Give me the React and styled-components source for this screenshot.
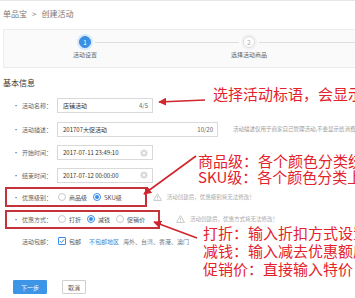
import React from 'react'
import styled, { createGlobalStyle } from 'styled-components'

const GlobalStyle = createGlobalStyle`
  html, body { margin:0; padding:0; background:#fff; }
  body { font-family:"Noto Sans CJK SC","Noto Sans",sans-serif; overflow:hidden; }
`

const Page = styled.div`
  position:relative;
  width:355px;
  height:298px;
  overflow:hidden;
  box-sizing:border-box;
  border-top:1px solid #e6e6e6;
  background:#fff;
`

const Crumb = styled.div`
  height:24px;
  display:flex;
  align-items:center;
  gap:5px;
  padding-left:3px;
  font-size:8px;
  color:#777;
  white-space:nowrap;
`

const Steps = styled.div`
  margin:4px 0 0 3px;
  height:39px;
  box-sizing:border-box;
  border:1px solid #ececec;
  border-right:none;
  background:#fafafa;
  display:flex;
  align-items:flex-start;
  padding:6px 0 0 75px;
`

const Step = styled.div`
  width:12px;
  display:flex;
  flex-direction:column;
  align-items:center;
  flex-shrink:0;
`

const Dot = styled.div`
  width:12px;
  height:12px;
  border-radius:50%;
  box-sizing:border-box;
  display:flex;
  align-items:center;
  justify-content:center;
  font-size:7px;
  line-height:1;
  background:${p => (p.active ? '#3a8ee6' : '#fff')};
  color:${p => (p.active ? '#fff' : '#aaa')};
  border:1px solid ${p => (p.active ? '#3a8ee6' : '#dcdcdc')};
  box-shadow:0 0 0 2px ${p => (p.active ? '#d8e9fa' : '#f3f3f3')};
`

const StepLabel = styled.div`
  margin-top:3px;
  font-size:6px;
  line-height:8px;
  color:#666;
  white-space:nowrap;
`

const Connector = styled.div`
  flex:${p => (p.grow ? '1' : '0 0 144px')};
  height:1px;
  background:#dedede;
  margin:6px ${p => (p.grow ? '0' : '4px')} 0 4px;
`

const Title = styled.div`
  margin:10px 0 5px 3px;
  font-size:8px;
  line-height:10px;
  color:#333;
`

const Row = styled.div`
  display:flex;
  align-items:center;
  height:${p => p.h}px;
`

const Label = styled.div`
  width:53px;
  flex-shrink:0;
  box-sizing:border-box;
  padding-right:1px;
  text-align:right;
  font-size:6px;
  color:#666;
  white-space:nowrap;
`

const Req = styled.span`
  color:#555;
  margin-right:3px;
`

const Input = styled.div`
  margin-left:4px;
  width:${p => p.w}px;
  height:15px;
  flex-shrink:0;
  box-sizing:border-box;
  border:1px solid #d9d9d9;
  background:#fff;
  display:flex;
  align-items:center;
  justify-content:space-between;
  padding:0 4px 0 5px;
  font-size:6px;
  color:#333;
  white-space:nowrap;
`

const Count = styled.span`
  color:#666;
`

const Help = styled.span`
  margin-left:15px;
  font-size:5.5px;
  color:#999;
  white-space:nowrap;
`

const Choices = styled.div`
  margin-left:5px;
  display:flex;
  align-items:center;
  gap:6px;
`

const Choice = styled.label`
  display:flex;
  align-items:center;
  gap:3px;
  font-size:6px;
  color:#555;
  white-space:nowrap;
`

const Radio = styled.span`
  width:8px;
  height:8px;
  border-radius:50%;
  box-sizing:border-box;
  border:1px solid ${p => (p.on ? '#3a8ee6' : '#c8c8c8')};
  background:#fff;
  display:flex;
  align-items:center;
  justify-content:center;
  &::after {
    content:'';
    width:4px;
    height:4px;
    border-radius:50%;
    background:${p => (p.on ? '#3a8ee6' : 'transparent')};
  }
`

const Warn = styled.div`
  margin-left:31px;
  display:flex;
  align-items:center;
  gap:5px;
  font-size:5.5px;
  color:#aaa;
  white-space:nowrap;
`

const Check = styled.span`
  margin-left:5px;
  width:8px;
  height:8px;
  box-sizing:border-box;
  border:1px solid #3a8ee6;
  border-radius:1px;
  display:flex;
  align-items:center;
  justify-content:center;
`

const Plain = styled.span`
  margin-left:${p => p.ml || 0}px;
  font-size:6px;
  color:${p => p.color || '#555'};
  white-space:nowrap;
`

const Actions = styled.div`
  margin-top:28px;
  padding-left:13px;
  display:flex;
  gap:15px;
`

const Button = styled.button`
  width:${p => p.w}px;
  height:14px;
  padding:0;
  box-sizing:border-box;
  border:1px solid ${p => (p.primary ? '#3d95e8' : '#cfcfcf')};
  background:${p => (p.primary ? '#3d95e8' : '#fff')};
  color:${p => (p.primary ? '#fff' : '#555')};
  font-family:inherit;
  font-size:6px;
  border-radius:1px;
`

const Marks = styled.svg`
  position:absolute;
  left:0;
  top:0;
  pointer-events:none;
`

const Note = styled.div`
  position:absolute;
  left:${p => p.x}px;
  top:${p => p.y}px;
  font-size:15px;
  line-height:${p => p.lh}px;
  color:#e4222c;
  white-space:nowrap;
`

const ClearIcon = () => (
  <svg width="8" height="8" viewBox="0 0 8 8">
    <circle cx="4" cy="4" r="3.6" fill="#dadada" />
    <path d="M2.6 2.6 L5.4 5.4 M5.4 2.6 L2.6 5.4" stroke="#fff" strokeWidth="0.9" />
  </svg>
)

const WarnIcon = () => (
  <svg width="9" height="8" viewBox="0 0 9 8">
    <path d="M4.5 0.6 L8.5 7.4 L0.5 7.4 Z" fill="none" stroke="#bbb" strokeWidth="0.8" />
    <path d="M4.5 3 V5.3 M4.5 6 V6.6" stroke="#bbb" strokeWidth="0.8" />
  </svg>
)

const TickIcon = () => (
  <svg width="6" height="6" viewBox="0 0 6 6">
    <path d="M0.8 3.1 L2.4 4.6 L5.2 1.4" fill="none" stroke="#3a8ee6" strokeWidth="1" />
  </svg>
)

const App = () => {
  return (
    <Page>
      <GlobalStyle />
      <Crumb>
        <span>单品宝</span>
        <span>&gt;</span>
        <span>创建活动</span>
      </Crumb>

      <Steps>
        <Step>
          <Dot active>1</Dot>
          <StepLabel>活动设置</StepLabel>
        </Step>
        <Connector />
        <Step>
          <Dot>2</Dot>
          <StepLabel>选择活动商品</StepLabel>
        </Step>
        <Connector grow />
      </Steps>

      <Title>基本信息</Title>

      <Row h={24}>
        <Label><Req>•</Req>活动名称：</Label>
        <Input w={96}>店铺活动<Count>4/5</Count></Input>
      </Row>
      <Row h={24}>
        <Label><Req>•</Req>活动描述：</Label>
        <Input w={161}>201707大促活动<Count>10/20</Count></Input>
        <Help>活动描述仅用于商家自己管理活动,不会显示给消费者</Help>
      </Row>
      <Row h={23}>
        <Label><Req>•</Req>开始时间：</Label>
        <Input w={96}>2017-07-11 23:49:10<ClearIcon /></Input>
      </Row>
      <Row h={22}>
        <Label><Req>•</Req>结束时间：</Label>
        <Input w={96}>2017-07-12 00:00:00<ClearIcon /></Input>
      </Row>
      <Row h={22}>
        <Label><Req>•</Req>优惠级别：</Label>
        <Choices>
          <Choice><Radio />商品级</Choice>
          <Choice><Radio on />SKU级</Choice>
        </Choices>
        <Warn><WarnIcon />活动创建后，优惠级别将无法修改！</Warn>
      </Row>
      <Row h={22}>
        <Label><Req>•</Req>优惠方式：</Label>
        <Choices>
          <Choice><Radio />打折</Choice>
          <Choice><Radio on />减钱</Choice>
          <Choice><Radio />促销价</Choice>
        </Choices>
        <Warn><WarnIcon />活动创建后，优惠方式将无法修改！</Warn>
      </Row>
      <Row h={22}>
        <Label>活动包邮：</Label>
        <Check><TickIcon /></Check>
        <Plain ml={3}>包邮</Plain>
        <Plain ml={8} color="#3a86d6">不包邮地区</Plain>
        <Plain ml={4} color="#777">海外、台湾、香港、澳门</Plain>
      </Row>

      <Actions>
        <Button primary w={34}>下一步</Button>
        <Button w={24}>取消</Button>
      </Actions>

      <Marks width="355" height="298" viewBox="0 0 355 298">
        <defs>
          <marker id="head" viewBox="0 0 10 10" refX="9" refY="5" markerWidth="5" markerHeight="5" orient="auto">
            <path d="M0 0 L10 5 L0 10 Z" fill="#d0262e" />
          </marker>
        </defs>
        <rect x="6" y="187" width="140" height="18" fill="none" stroke="#c4323a" strokeWidth="2" />
        <rect x="6" y="210" width="153" height="17" fill="none" stroke="#c4323a" strokeWidth="2" />
        <line x1="205" y1="99" x2="159" y2="101" stroke="#d0262e" strokeWidth="1.6" markerEnd="url(#head)" />
        <line x1="196" y1="155" x2="144" y2="193" stroke="#d0262e" strokeWidth="1.6" markerEnd="url(#head)" />
        <line x1="197" y1="237" x2="154" y2="221" stroke="#d0262e" strokeWidth="1.6" markerEnd="url(#head)" />
      </Marks>

      <Note x={213} y={85} lh={16}>选择活动标语，会显示在商品标题前</Note>
      <Note x={198} y={152} lh={15.5}>
        商品级：各个颜色分类统一设置<br />
        SKU级：各个颜色分类上分别设置
      </Note>
      <Note x={203} y={223} lh={18}>
        打折：输入折扣方式设置<br />
        减钱：输入减去优惠额度<br />
        促销价：直接输入特价
      </Note>
    </Page>
  )
}

export default App
